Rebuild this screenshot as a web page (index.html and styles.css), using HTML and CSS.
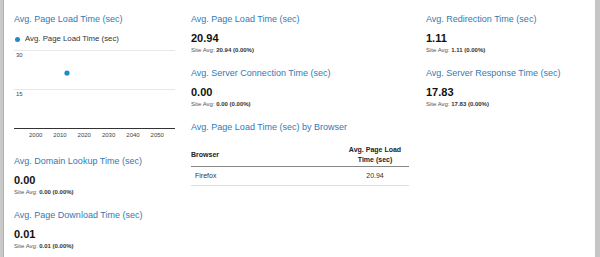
FILE: index.html
```html
<!DOCTYPE html>
<html>
<head>
<meta charset="utf-8">
<link rel="stylesheet" href="styles.css">
</head>
<body>
<div class="frame">
  <div class="grid">
    <div class="col col1">
      <div class="title">Avg. Page Load Time (sec)</div>
      <div class="legend"><span class="dot"></span>Avg. Page Load Time (sec)</div>
      <svg class="chart" width="161" height="100" viewBox="0 0 161 100">
        <line x1="0" y1="5.5" x2="161" y2="5.5" stroke="#e8e8e8" stroke-width="1"/>
        <line x1="0" y1="44.5" x2="161" y2="44.5" stroke="#e8e8e8" stroke-width="1"/>
        <line x1="0" y1="83.5" x2="161" y2="83.5" stroke="#333333" stroke-width="1"/>
        <text x="2" y="12" class="ax">30</text>
        <text x="2" y="51" class="ax">15</text>
        <text x="21.7" y="92" class="ax" text-anchor="middle">2000</text>
        <text x="46" y="92" class="ax" text-anchor="middle">2010</text>
        <text x="70.3" y="92" class="ax" text-anchor="middle">2020</text>
        <text x="94.6" y="92" class="ax" text-anchor="middle">2030</text>
        <text x="119" y="92" class="ax" text-anchor="middle">2040</text>
        <text x="143.3" y="92" class="ax" text-anchor="middle">2050</text>
        <circle cx="53" cy="28" r="2.6" fill="#1b8cc8"/>
      </svg>
      <div class="metric">
        <div class="title">Avg. Domain Lookup Time (sec)</div>
        <div class="value">0.00</div>
        <div class="site">Site Avg: <b>0.00 (0.00%)</b></div>
      </div>
      <div class="metric">
        <div class="title">Avg. Page Download Time (sec)</div>
        <div class="value">0.01</div>
        <div class="site">Site Avg: <b>0.01 (0.00%)</b></div>
      </div>
    </div>
    <div class="col col2">
      <div class="metric">
        <div class="title">Avg. Page Load Time (sec)</div>
        <div class="value">20.94</div>
        <div class="site">Site Avg: <b>20.94 (0.00%)</b></div>
      </div>
      <div class="metric">
        <div class="title">Avg. Server Connection Time (sec)</div>
        <div class="value">0.00</div>
        <div class="site">Site Avg: <b>0.00 (0.00%)</b></div>
      </div>
      <div class="title">Avg. Page Load Time (sec) by Browser</div>
      <table class="tbl">
        <thead>
          <tr><th class="c1">Browser</th><th class="c2">Avg. Page Load<br>Time (sec)</th></tr>
        </thead>
        <tbody>
          <tr><td class="c1">Firefox</td><td class="c2">20.94</td></tr>
        </tbody>
      </table>
    </div>
    <div class="col col3">
      <div class="metric">
        <div class="title">Avg. Redirection Time (sec)</div>
        <div class="value">1.11</div>
        <div class="site">Site Avg: <b>1.11 (0.00%)</b></div>
      </div>
      <div class="metric">
        <div class="title">Avg. Server Response Time (sec)</div>
        <div class="value">17.83</div>
        <div class="site">Site Avg: <b>17.83 (0.00%)</b></div>
      </div>
    </div>
  </div>
</div>
</body>
</html>
```
FILE: styles.css
```css
html, body {
  margin: 0;
  padding: 0;
  background: #ffffff;
}
body {
  font-family: "Liberation Sans", Arial, sans-serif;
  color: #222;
  width: 600px;
  height: 257px;
  overflow: hidden;
}
.frame {
  width: 592px;
  height: 257px;
  border-left: 3px solid #c9c9c9;
  border-right: 5px solid #c6c6c6;
  box-shadow: inset 1px 0 0 #b0b0b0;
  box-sizing: content-box;
  background: #fff;
}
.grid {
  display: grid;
  grid-template-columns: 177px 235px 1fr;
  padding-left: 11px;
  padding-top: 13px;
}
.title {
  font-size: 9px;
  line-height: 12px;
  color: #3279b5;
  white-space: nowrap;
}
.metric {
  margin-bottom: 13px;
}
.metric .title {
  margin-bottom: 6px;
}
.value {
  font-size: 11px;
  font-weight: bold;
  line-height: 14px;
  color: #111;
}
.site {
  margin-top: 1px;
  font-size: 6px;
  line-height: 8px;
  color: #555;
  white-space: nowrap;
}
.site b {
  color: #333;
}
.legend {
  display: flex;
  align-items: center;
  margin-top: 9px;
  font-size: 7.8px;
  line-height: 10px;
  color: #333;
  white-space: nowrap;
}
.dot {
  width: 5px;
  height: 5px;
  border-radius: 50%;
  background: #1b8cc8;
  margin-left: 1px;
  margin-right: 5px;
}
.chart {
  display: block;
  margin-top: 1px;
  margin-bottom: 10px;
}
.ax {
  font-family: "Liberation Sans", Arial, sans-serif;
  font-size: 6px;
  fill: #444;
}
.col2 > .title {
  margin-top: 1px;
}
.tbl {
  margin-top: 12px;
  width: 218px;
  border-collapse: collapse;
  font-size: 7px;
}
.tbl th {
  font-weight: bold;
  line-height: 10px;
  padding: 0 0 1px 0;
  border-bottom: 1px solid #888;
  vertical-align: middle;
  color: #222;
}
.tbl th.c1 {
  text-align: left;
  padding-left: 0;
}
.tbl th.c2 {
  text-align: center;
  width: 68px;
}
.tbl td {
  line-height: 8px;
  padding: 5px 0 5px 0;
  border-bottom: 1px solid #ddd;
  color: #333;
}
.tbl td.c1 {
  padding-left: 4px;
}
.tbl td.c2 {
  text-align: center;
}
```
